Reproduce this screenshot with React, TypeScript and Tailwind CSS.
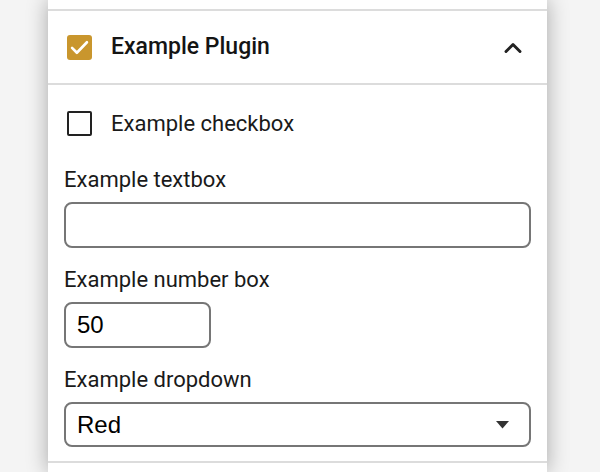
import { ChevronUp } from 'lucide-react'

const labelFont = { fontFamily: 'Roboto, "Noto Sans", sans-serif' }
const inputFont = { fontFamily: '"Liberation Sans", Arial, sans-serif' }

function Field({ label, children }: { label: string; children: React.ReactNode }) {
  return (
    <div className="flex flex-col">
      <label className="text-[22px] leading-[24px] text-[#1a1a1a] mb-[10px]">{label}</label>
      {children}
    </div>
  )
}

export default function App() {
  return (
    <div className="w-[600px] h-[472px] bg-[#f4f4f4] overflow-hidden" style={labelFont}>
      <div className="ml-[48px] w-[499px] h-full bg-white shadow-[0_0_20px_rgba(0,0,0,0.32)] flex flex-col">
        {/* previous section end */}
        <div className="h-[11px] shrink-0 border-b-2 border-[#dcdcdc]" />

        {/* plugin header */}
        <div className="h-[74px] shrink-0 flex items-center pl-[19px] pr-[20px] border-b-2 border-[#dcdcdc]">
          <div className="w-[25px] h-[25px] rounded-[3px] bg-[#c9962d] flex items-center justify-center">
            <svg width="21" height="21" viewBox="0 0 24 24" fill="none" stroke="white" strokeWidth="3" strokeLinecap="round" strokeLinejoin="round">
              <path d="M3.5 12.5l5.5 5.5L20.5 6" />
            </svg>
          </div>
          <span className="ml-[19px] text-[23px] font-medium text-[#141414]">Example Plugin</span>
          <ChevronUp className="ml-auto mt-[1px] w-[28px] h-[28px] text-[#222]" strokeWidth={2.5} />
        </div>

        {/* plugin settings */}
        <div className="flex flex-col pt-[26px] pl-[16px] pr-[16px] pb-[14px] border-b-2 border-[#dcdcdc]">
          <div className="flex items-center h-[25px] pl-[3px]">
            <div className="w-[25px] h-[25px] rounded-[2px] border-[2.5px] border-[#222]" />
            <span className="ml-[19px] text-[22px] text-[#1a1a1a]">Example checkbox</span>
          </div>

          <div className="mt-[32px] flex flex-col gap-[20px]">
            <Field label="Example textbox">
              <input
                type="text"
                className="w-full h-[46px] rounded-[8px] border-2 border-[#767676] px-[11px] text-[24px] outline-none"
                style={inputFont}
              />
            </Field>

            <Field label="Example number box">
              <input
                type="text"
                defaultValue="50"
                className="w-[147px] h-[46px] rounded-[8px] border-2 border-[#767676] px-[11px] text-[24px] text-black outline-none"
                style={inputFont}
              />
            </Field>

            <Field label="Example dropdown">
              <div
                className="w-full h-[45px] rounded-[8px] border-2 border-[#767676] pl-[11px] pr-[20px] flex items-center justify-between text-[24px] text-black"
                style={inputFont}
              >
                <span>Red</span>
                <svg width="13" height="8" viewBox="0 0 13 8">
                  <path d="M0 0h13L6.5 7.5z" fill="#333" />
                </svg>
              </div>
            </Field>
          </div>
        </div>
      </div>
    </div>
  )
}
